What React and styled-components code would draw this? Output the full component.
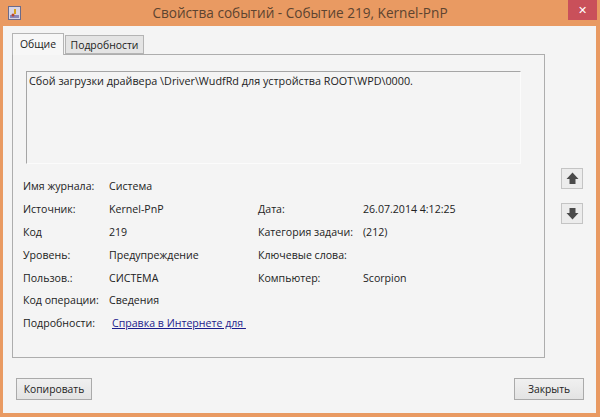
import React from 'react';
import styled, { createGlobalStyle } from 'styled-components';

const GlobalStyle = createGlobalStyle`
    html, body {
        margin: 0;
        padding: 0;
        background: #e99a62;
    }
`;

const Window = styled.div`
    width: 600px;
    height: 417px;
    box-sizing: border-box;
    padding: 0 4px 4px 3px;
    background: #e99a62;
    display: flex;
    flex-direction: column;
    font-family: "Open Sans", "Noto Sans", sans-serif;
    font-size: 10.6px;
    color: #222;
    overflow: hidden;
`;

const TitleBar = styled.div`
    height: 26px;
    flex: none;
    display: flex;
    align-items: flex-start;
    justify-content: space-between;
`;

const AppIcon = styled.svg`
    width: 13px;
    height: 14px;
    margin: 6px 0 0 5px;
`;

const Title = styled.div`
    flex: 1;
    padding-left: 11px;
    text-align: center;
    font-size: 13.6px;
    line-height: 26px;
    color: #5d4430;
`;

const CloseButton = styled.div`
    width: 29px;
    height: 20px;
    margin-right: -1px;
    background: #c9505a;
    color: #fff;
    font-size: 11px;
    line-height: 20px;
    text-align: center;
`;

const Body = styled.div`
    flex: 1;
    background: #f4f4f4;
    display: flex;
    flex-direction: column;
    padding: 7px 12px 13px 9px;
`;

const Main = styled.div`
    display: flex;
`;

const LeftColumn = styled.div`
    width: 533px;
`;

const Tabs = styled.div`
    display: flex;
    align-items: flex-end;
    height: 21px;
    position: relative;
    z-index: 1;
    font-size: 10.4px;
`;

const Tab = styled.div`
    box-sizing: border-box;
    width: ${p => p.$width}px;
    height: ${p => (p.$active ? 22 : 19)}px;
    margin-bottom: ${p => (p.$active ? -1 : 0)}px;
    margin-right: 1px;
    text-align: center;
    line-height: ${p => (p.$active ? 20 : 19)}px;
    border: 1px solid #b4b4b4;
    border-bottom: ${p => (p.$active ? 'none' : '1px solid #b4b4b4')};
    background: ${p => (p.$active ? '#f7f7f7' : '#e4e4e4')};
`;

const Panel = styled.div`
    box-sizing: border-box;
    height: 304px;
    border: 1px solid #adadad;
    padding: 16px 23px 0 13px;
`;

const Description = styled.div`
    box-sizing: border-box;
    height: 93px;
    border-top: 1px solid #a5a5a5;
    border-left: 1px solid #a5a5a5;
    border-right: 1px solid #fbfbfb;
    border-bottom: 1px solid #fbfbfb;
    padding: 0 2px;
    font-size: 10.8px;
    line-height: 17px;
`;

const Details = styled.div`
    display: grid;
    grid-template-columns: 86px 149px 105px auto;
    grid-auto-rows: 22.8px;
    align-items: center;
    margin: 11px 0 0 -3px;
`;

const Label = styled.div`
    grid-column: ${p => p.$col || 1};
    white-space: nowrap;
`;

const Value = styled.div`
    grid-column: ${p => p.$col || 2};
    white-space: nowrap;
`;

const HelpLink = styled.a`
    grid-column: 2 / 4;
    margin-left: 3px;
    color: #1c1c8c;
    text-decoration: underline;
    white-space: pre;
`;

const Side = styled.div`
    display: flex;
    flex-direction: column;
    gap: 14px;
    margin: 135px 0 0 16px;
`;

const ArrowButton = styled.div`
    box-sizing: border-box;
    width: 22px;
    height: 21px;
    border: 1px solid #c4c4c4;
    background: #ececec;
    display: flex;
    align-items: center;
    justify-content: center;
`;

const Footer = styled.div`
    margin-top: auto;
    display: flex;
    justify-content: space-between;
    padding: 0 0 0 4px;
`;

const Button = styled.div`
    box-sizing: border-box;
    width: ${p => p.$width}px;
    height: 22px;
    border: 1px solid #aaa;
    background: linear-gradient(#f0f0f0, #e3e3e3);
    font-size: 10.3px;
    text-align: center;
    line-height: 21px;
`;

function Arrow({ down }) {
    return (
        <svg width="13" height="13" viewBox="0 0 13 13">
            <path
                d={down ? 'M3.5 1h6v5h3l-6 6.5-6-6.5h3z' : 'M3.5 12h6V7h3l-6-6.5-6 6.5h3z'}
                fill="#4a4a4a"
            />
        </svg>
    );
}

const rows = [
    ['Источник:', 'Kernel-PnP', 'Дата:', '26.07.2014 4:12:25'],
    ['Код', '219', 'Категория задачи:', '(212)'],
    ['Уровень:', 'Предупреждение', 'Ключевые слова:', ''],
    ['Пользов.:', 'СИСТЕМА', 'Компьютер:', 'Scorpion'],
];

export default function App() {
    return (
        <Window>
            <GlobalStyle />
            <TitleBar>
                <AppIcon viewBox="0 0 13 14">
                    <rect x="0.5" y="0.5" width="12" height="13" fill="#d9d4e4" stroke="#6b6b8a" />
                    <rect x="2" y="9" width="9" height="3" fill="#8a86b8" />
                    <path d="M6 3h2v5H6z" fill="#d6a21e" />
                    <circle cx="5" cy="9" r="1.5" fill="#b8452e" />
                </AppIcon>
                <Title>Свойства событий - Событие 219, Kernel-PnP</Title>
                <CloseButton>✕</CloseButton>
            </TitleBar>
            <Body>
                <Main>
                    <LeftColumn>
                        <Tabs>
                            <Tab $active $width={52}>Общие</Tab>
                            <Tab $width={79}>Подробности</Tab>
                        </Tabs>
                        <Panel>
                            <Description>
                                Сбой загрузки драйвера \Driver\WudfRd для устройства ROOT\WPD\0000.
                            </Description>
                            <Details>
                                <Label>Имя журнала:</Label>
                                <Value>Система</Value>
                                {rows.map(r => (
                                    <React.Fragment key={r[0]}>
                                        <Label>{r[0]}</Label>
                                        <Value>{r[1]}</Value>
                                        <Label $col={3}>{r[2]}</Label>
                                        <Value $col={4}>{r[3]}</Value>
                                    </React.Fragment>
                                ))}
                                <Label>Код операции:</Label>
                                <Value>Сведения</Value>
                                <Label>Подробности:</Label>
                                <HelpLink href="#">Справка в Интернете для </HelpLink>
                            </Details>
                        </Panel>
                    </LeftColumn>
                    <Side>
                        <ArrowButton><Arrow /></ArrowButton>
                        <ArrowButton><Arrow down /></ArrowButton>
                    </Side>
                </Main>
                <Footer>
                    <Button $width={76}>Копировать</Button>
                    <Button $width={70}>Закрыть</Button>
                </Footer>
            </Body>
        </Window>
    );
}
